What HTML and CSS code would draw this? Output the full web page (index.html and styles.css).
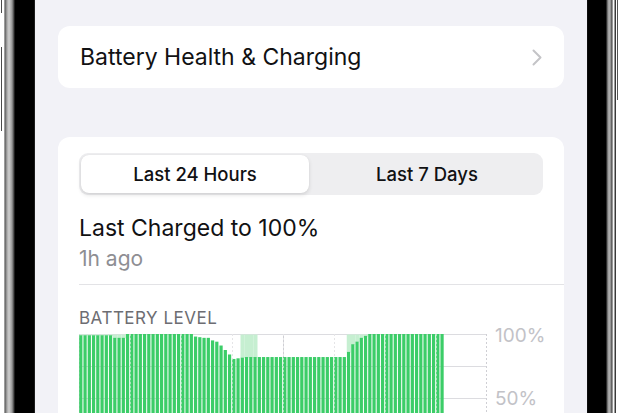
FILE: index.html
```html
<!DOCTYPE html>
<html lang="en">
<head>
<meta charset="utf-8">
<title>Battery</title>
<link rel="stylesheet" href="styles.css">
</head>
<body>
<div class="device">
  <div class="bezel-left">
    <div class="rail-left"><span class="vol vol-a"></span><span class="vol vol-b"></span></div>
    <div class="rim-left"></div>
  </div>
  <main class="screen">
    <section class="card row-card">
      <span class="row-title">Battery Health &amp; Charging</span>
      <svg class="chevron" width="12" height="17" viewBox="0 0 12 17"><path d="M2.5 1.5 L9.5 8.5 L2.5 15.5" fill="none" stroke="#c4c4c7" stroke-width="2" stroke-linecap="round" stroke-linejoin="round"/></svg>
    </section>
    <section class="card usage">
      <div class="segmented">
        <div class="seg seg-active">Last 24 Hours</div>
        <div class="seg">Last 7 Days</div>
      </div>
      <div class="charged">Last Charged to 100%</div>
      <div class="ago">1h ago</div>
      <div class="divider"></div>
      <div class="section-label">BATTERY LEVEL</div>
      <div class="chart">
        <svg id="plot" class="plot" width="408" height="128" viewBox="0 0 408 128"></svg>
        <div class="y-labels"><span class="y-label">100%</span><span class="y-label">50%</span></div>
      </div>
    </section>
  </main>
  <div class="bezel-right">
    <div class="rim-right"></div>
    <div class="rail-right"><span class="side-btn"></span></div>
  </div>
</div>
<script src="chart.js"></script>
</body>
</html>
```

FILE: styles.css
```css
html, body {
  margin: 0;
  padding: 0;
}
body {
  width: 620px;
  height: 413px;
  overflow: hidden;
  background: #ffffff;
  font-family: Inter, "Noto Sans", "Liberation Sans", sans-serif;
  color: #111113;
}
.device {
  display: flex;
  height: 413px;
}
.bezel-left {
  flex: none;
  width: 35px;
  display: flex;
}
.rail-left {
  width: 4px;
  display: flex;
  flex-direction: column;
  background: #ffffff;
}
.vol {
  display: block;
  margin-left: 1px;
  width: 2px;
  border-left: 1px solid #4a4a4a;
  border-right: 1px solid #9a9a9a;
}
.vol-a { height: 13px; }
.vol-b { height: 84px; margin-top: 34px; }
.rim-left {
  flex: 1;
  background: linear-gradient(to right, #d8d8d8 0, #5e5e5e 1px, #a8a8a8 3px, #cfcfcf 5px, #9a9a9a 8px, #3c3c3c 10px, #000 11px, #000 30px, #3a3a3a 31px);
}
.screen {
  flex: none;
  width: 552px;
  box-sizing: border-box;
  background: #f2f2f7;
  padding: 26px 23px 0;
}
.card {
  background: #ffffff;
  border-radius: 12px;
}
.row-card {
  height: 62px;
  display: flex;
  align-items: center;
  justify-content: space-between;
  padding: 0 21px 0 22px;
}
.row-title {
  font-size: 23px;
}
.chevron {
  display: block;
}
.usage {
  margin-top: 49px;
  padding: 16px 21px 40px;
}
.segmented {
  height: 42px;
  box-sizing: border-box;
  padding: 2px;
  border-radius: 9px;
  background: #eeeef0;
  display: grid;
  grid-template-columns: 1fr 1fr;
  column-gap: 4px;
}
.seg {
  display: flex;
  align-items: center;
  justify-content: center;
  font-size: 18.5px;
  font-weight: 500;
  border-radius: 8px;
}
.seg-active {
  background: #ffffff;
  box-shadow: 0 2px 4px rgba(0, 0, 0, 0.12), 0 0 1px rgba(0, 0, 0, 0.08);
}
.charged {
  margin-top: 18px;
  font-size: 23px;
  line-height: 30px;
}
.ago {
  margin-top: 4px;
  font-size: 21px;
  line-height: 24px;
  color: #8e8e93;
}
.divider {
  margin-top: 13px;
  margin-right: -21px;
  height: 1px;
  background: #e3e3e6;
}
.section-label {
  margin-top: 23px;
  font-size: 17px;
  line-height: 20px;
  color: #6d6d72;
  letter-spacing: 0.5px;
}
.chart {
  margin-top: 6px;
  display: flex;
  align-items: flex-start;
}
.plot {
  display: block;
  flex: none;
}
.y-labels {
  margin-left: 8px;
  margin-top: -8px;
  display: flex;
  flex-direction: column;
  gap: 43px;
}
.y-label {
  font-size: 19px;
  line-height: 20px;
  color: #c2c2c7;
}
.bezel-right {
  flex: none;
  width: 33px;
  display: flex;
}
.rim-right {
  width: 29px;
  background: linear-gradient(to right, #1a1a1a 0, #000 1px, #000 19px, #5a5a5a 20px, #b8b8b8 22px, #8a8a8a 24px, #3a3a3a 25px, #f2f2f2 26px, #ffffff 27px, #3a3a3a 28px);
}
.rail-right {
  flex: 1;
  background: #ffffff;
}
.side-btn {
  display: block;
  width: 1px;
  margin-left: 1px;
  height: 100px;
  background: #555;
}
```

FILE: chart.js
```js
(function () {
  var NS = 'http://www.w3.org/2000/svg';
  var svg = document.getElementById('plot');
  var W = 408, H = 128, slot = W / 96, barW = slot * 0.76;
  var vals = [];
  function rep(v, n) { for (var k = 0; k < n; k++) vals.push(v); }
  rep(99, 8); rep(97, 3); rep(100, 16);
  [98, 97.5, 97, 97, 95, 94, 91, 87.5, 84, 80.5, 81, 81.5].forEach(function (v) { vals.push(v); });
  rep(82, 24);
  [86, 92, 94, 97, 98.5].forEach(function (v) { vals.push(v); });
  rep(100, 18);
  function charging(i) {
    return (i <= 11) || (i >= 38 && i <= 41) || (i >= 63 && i <= 67);
  }
  function el(name, attrs) {
    var e = document.createElementNS(NS, name);
    for (var a in attrs) e.setAttribute(a, attrs[a]);
    svg.appendChild(e);
    return e;
  }
  var y;
  for (y = 0; y <= 4; y++) {
    var yy = y === 4 ? H - 0.5 : y * 32 + 0.5;
    el('line', { x1: 0, x2: W, y1: yy, y2: yy, stroke: '#dcdce0', 'stroke-width': 1 });
  }
  var k;
  for (k = 0; k <= 8; k++) {
    var xx = k === 8 ? W - 0.5 : k * 51 + 0.5;
    var attrs = { x1: xx, x2: xx, y1: 0, y2: H, stroke: '#cfcfd4', 'stroke-width': 1 };
    if (k !== 4) attrs['stroke-dasharray'] = '2 2';
    el('line', attrs);
  }
  vals.forEach(function (v, i) {
    var top = (100 - v) * H / 100;
    if (charging(i) && top > 0.2) {
      el('rect', { x: i * slot, y: 0.5, width: slot, height: top, fill: '#c6efd1' });
    }
  });
  vals.forEach(function (v, i) {
    var top = (100 - v) * H / 100;
    el('rect', { x: i * slot + 0.2, y: top, width: barW, height: H - top, fill: '#3ccd68' });
  });
  for (k = 1; k <= 7; k++) {
    var x2 = k * 51 + 0.5;
    el('line', { x1: x2, x2: x2, y1: 0, y2: H, stroke: 'rgba(255,255,255,0.45)', 'stroke-width': 1, 'stroke-dasharray': '2 2' });
  }
})();
```
